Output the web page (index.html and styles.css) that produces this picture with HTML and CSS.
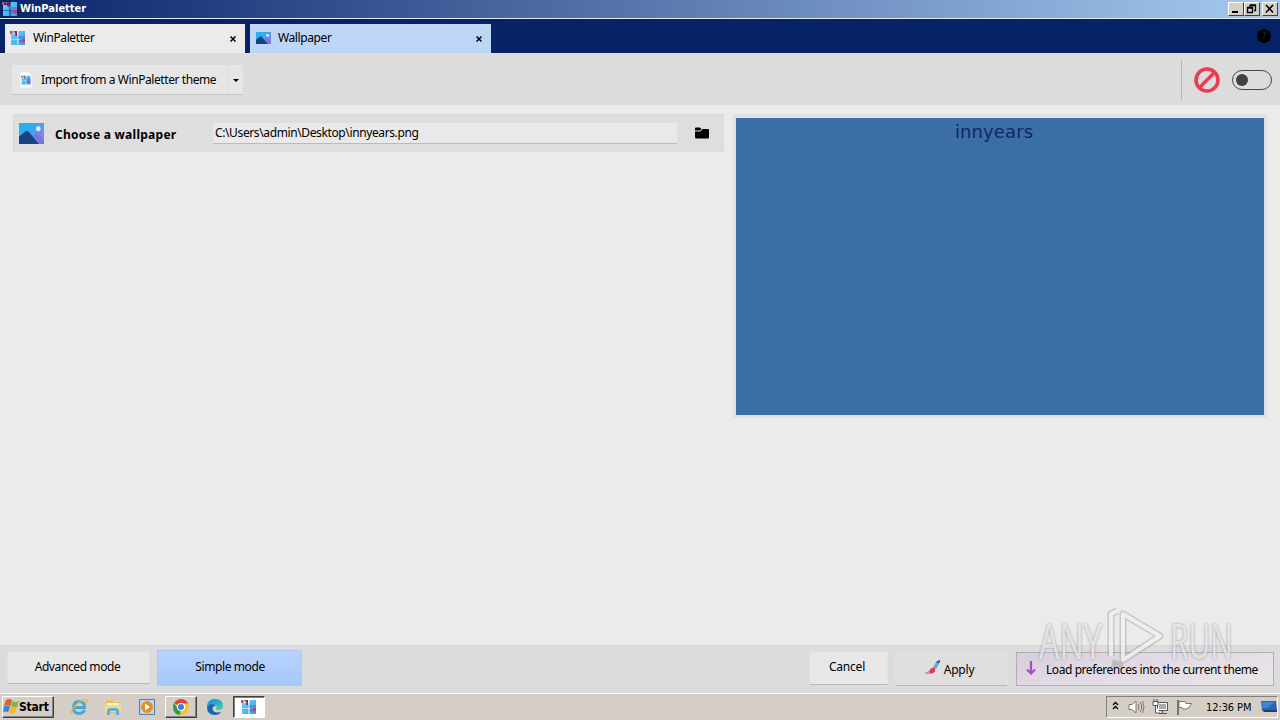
FILE: index.html
```html
<!DOCTYPE html>
<html lang="en">
<head>
    <meta charset="utf-8">
    <title>WinPaletter</title>
    <link rel="stylesheet" href="styles.css">
</head>
<body>
    <!-- shared icons -->
    <svg class="defs" width="0" height="0">
        <defs>
            <linearGradient id="tile" x1="0" y1="0" x2="1" y2="1"><stop offset="0" stop-color="#72d0fb"/><stop offset="1" stop-color="#2f9fee"/></linearGradient>
            <linearGradient id="sky" x1="0" y1="0" x2="1" y2="1"><stop offset=".3" stop-color="#2aaef0"/><stop offset="1" stop-color="#aa75f0"/></linearGradient>
            <linearGradient id="edge" x1="0" y1="0" x2="1" y2="1"><stop offset="0" stop-color="#1690cf"/><stop offset=".5" stop-color="#22acd5"/><stop offset="1" stop-color="#55d78b"/></linearGradient>
        </defs>
        <symbol id="logo" viewBox="0 0 16 16">
            <path d="M1 4h6.500v5H1zM8.500 1H15v8H8.500zM1 9.500h6.500V15H1zM8.500 9.500H15V15H8.500z" fill="url(#tile)"/>
            <path d="M0 1h2.500v3H0zM3.500 1h1.500v2H3.500z" fill="#a05a78"/>
            <path d="M5 1h2v5H5.500z" fill="#7c2b50"/>
            <path d="M8.500 6H15v3H8.500z" fill="#4b8fe0"/>
            <path d="M12 9h3v3.500h-3z" fill="#c8405f"/>
            <path d="M9 9.500h3v3H9z" fill="#5c77c4"/>
        </symbol>
        <symbol id="picture" viewBox="0 0 24 20" preserveAspectRatio="none">
            <path d="M0 0h24v20H0z" fill="url(#sky)"/>
            <path d="M13 14l4-5 7 7v4H13z" fill="#7878dd"/>
            <path d="M0 13l6-5q2-1 4 1l9 11H0z" fill="#164481"/>
            <circle cx="18.500" cy="5.500" r="2.300" fill="#e4f4ff"/>
        </symbol>
        <symbol id="cross" viewBox="0 0 6 6">
            <path d="M.5 .5l5 5M5.500 .5l-5 5" stroke="#000" stroke-width="1.500"/>
        </symbol>
    </svg>

    <header class="titlebar">
        <svg class="icon16"><use href="#logo"/></svg>
        <span class="title">WinPaletter</span>
        <div class="captions">
            <button><svg width="14" height="12"><path d="M3 9h6" stroke="#000" stroke-width="2"/></svg></button>
            <button><svg width="14" height="12"><path d="M5 4V2.500h5.500v5H9M5 2h6M2 5h6M2.500 4.500h5v5h-5z" fill="none" stroke="#000" stroke-width="1.300"/></svg></button>
            <button class="close"><svg width="14" height="12"><path d="M3 2l7 7.500M10 2L3 9.500" stroke="#000" stroke-width="1.600"/></svg></button>
        </div>
    </header>

    <nav class="tabs">
        <div class="tab">
            <svg class="icon16"><use href="#logo"/></svg>
            <span class="tab-name">WinPaletter</span>
            <svg class="x"><use href="#cross"/></svg>
        </div>
        <div class="tab selected">
            <svg class="icon-pic"><use href="#picture"/></svg>
            <span class="tab-name">Wallpaper</span>
            <svg class="x"><use href="#cross"/></svg>
        </div>
        <span class="help">?</span>
    </nav>

    <section class="toolbar">
        <div class="import">
            <svg class="file" viewBox="0 0 14 18">
                <path d="M1 1h9l3 3v13H1z" fill="#fbfbfd" stroke="#d5dbe2" stroke-width=".5"/>
                <use href="#logo" x="2" y="4" width="10" height="10"/>
            </svg>
            <span>Import from a WinPaletter theme</span>
            <span class="drop"><svg width="6" height="3"><path d="M0 0h6L3 3z"/></svg></span>
        </div>
        <div class="status">
            <svg width="26" height="26" viewBox="0 0 26 26"><circle cx="13" cy="13" r="11" fill="none" stroke="#ea3c52" stroke-width="3.600"/><path d="M5.500 20.500l15-15" stroke="#ea3c52" stroke-width="3.600"/></svg>
            <span class="toggle"></span>
        </div>
    </section>

    <main>
        <div class="chooser">
            <svg class="big-pic"><use href="#picture"/></svg>
            <b>Choose a wallpaper</b>
            <div class="path">C:\Users\admin\Desktop\innyears.png</div>
            <svg class="folder" viewBox="0 0 14 12"><path d="M0 1.500Q0 .5 1 .5h4L6.500 2 5 3.500H0z"/><path d="M0 4.500h5.500L7.500 2H13q1 0 1 1v7.500q0 1-1 1H1q-1 0-1-1z"/></svg>
        </div>
        <div class="preview"><span>innyears</span></div>
    </main>

    <footer class="actions">
        <button class="btn advanced">Advanced mode</button>
        <button class="btn simple">Simple mode</button>
        <button class="btn cancel">Cancel</button>
        <button class="btn apply">
            <svg width="16" height="16" viewBox="0 0 16 16"><path d="M8 8l3-6 4-2v2l-4 7z" fill="#55acd8"/><path d="M11 2l4-2v2l-2 1z" fill="#245b88"/><path d="M0 12.500q4 0 5-3 2-3 5-1v3q-2 3-9 2z" fill="#ed344c"/><path d="M0 12.500l5-1v2q-3 1-5-1z" fill="#d997a5"/></svg>
            <span>Apply</span>
        </button>
        <button class="btn load">
            <svg width="10" height="14" viewBox="0 0 10 14"><path d="M5 0v12M1 8.500l4 4 4-4" fill="none" stroke="#a44bc9" stroke-width="2.200"/></svg>
            <span>Load preferences into the current theme</span>
        </button>
    </footer>

    <footer class="taskbar">
        <div class="start">
            <svg width="16" height="16" viewBox="0 0 16 16"><path d="M3 1q3-2 6 0L7.500 7Q4 5 1 7z" fill="#e55e2b"/><path d="M9.500 2q3 2 6.500 0l-2 6q-3 1-6-1z" fill="#80b53e"/><path d="M1 7.500q3-2 6 0l-2 6q-2-2-5 0z" fill="#3b83cf"/><path d="M7.500 7.500q3 2 6 1l-2 6q-3 1-5.500-1z" fill="#f5b82e"/></svg>
            <span>Start</span>
        </div>
        <div class="apps">
            <span class="app"><svg viewBox="0 0 18 18"><path d="M14.500 12q-1.500 3.500-5.500 3.500-5.500 0-5.500-6T9 3.500q6 0 5.500 6H5" fill="none" stroke="#44a6df" stroke-width="2.800"/><path d="M2 16q-3-2 4-9t10.500-5q1.500 1-1 4" fill="none" stroke="#e5b935" stroke-width="1.300"/></svg></span>
            <span class="app"><svg viewBox="0 0 18 18"><path d="M2 2h6l1 2h7v11H2z" fill="#e3c262"/><path d="M3 5h12v3H3z" fill="#fff3c2"/><path d="M1 7h16v7H1z" fill="#f0da8e"/><path d="M3 17v-5q1-2 3-2h6q2 0 3 2v5h-3v-4H6v4z" fill="#5eafda"/></svg></span>
            <span class="app"><svg viewBox="0 0 18 18"><path d="M1.500 1.500h15v15h-15z" fill="#aed4ef" stroke="#4c86b9"/><path d="M3.500 3.500h11v11h-11z" fill="#d9e6ec"/><circle cx="9" cy="9" r="6" fill="#ee8c20"/><path d="M7 5.500l5 3.500-5 3.500z" fill="#fff"/></svg></span>
            <span class="app raised"><svg viewBox="0 0 18 18"><circle cx="9" cy="9" r="8" fill="#f4c62c"/><path d="M9 9L2 5Q5 1 9 1q5 0 7 4.500H9z" fill="#df4436"/><path d="M9 9l-1 8Q1 16 1 9q0-2 1-4l4 6z" fill="#2c9b50"/><circle cx="9" cy="9" r="4" fill="#fff"/><circle cx="9" cy="9" r="3" fill="#397fe7"/></svg></span>
            <span class="app"><svg viewBox="0 0 18 18"><path d="M1 9Q1 1 9 1t8 7q0 4-4 4-3 0-3-1.500 1-1 .5-2.500Q9.500 6 7 6 3 6 1 9z" fill="url(#edge)"/><path d="M1 9q2-3.500 6-3 2.500.5 3 2-3-.5-3.500 2Q6.500 14 11 14.500q2.500.3 4.500-1Q13 17 9 17 1 17 1 9z" fill="#1767b2"/></svg></span>
            <span class="app pressed"><svg viewBox="0 0 18 18"><use href="#logo" x="1" y="1" width="16" height="16"/></svg></span>
        </div>
        <div class="tray">
            <svg class="chev" viewBox="0 0 7 9"><path d="M1 4l2.500-2.500L6 4M1 8l2.500-2.500L6 8" fill="none" stroke="#000" stroke-width="1.300"/></svg>
            <svg class="sound" viewBox="0 0 17 16"><path d="M1 5.500h3L8 2v12l-4-3.500H1z" fill="#fff" stroke="#777"/><path d="M10 5q2 3 0 6M12 3q3.500 5 0 10M14.500 2q3 6 0 12" fill="none" stroke="#777"/></svg>
            <svg class="net" viewBox="0 0 17 16"><path d="M5.500 3.500h10v8h-10z" fill="#aaa" stroke="#555"/><path d="M6.500 4.500h8v6h-8z" fill="none" stroke="#fff"/><path d="M1 2.500h5v4H1zM2 0v3M5 0v3M3.500 6v8H8M7 14.500h8M10.500 12v2" fill="#fff" stroke="#555"/></svg>
            <svg class="flag" viewBox="0 0 17 16"><path d="M2 1v15" stroke="#777" stroke-width="2"/><path d="M3 2.500h6l1 2h5.500L13 8.500l-3 1.500H7L6 8.500H3z" fill="#fff" stroke="#777"/></svg>
            <span class="clock">12:36 PM</span>
            <svg class="desk" viewBox="0 0 16 14"><path d="M0 1h15l1 9H1z" fill="#2468bd"/><path d="M1 2h13L6 8H1.500z" fill="#3f86d8"/><path d="M1 10h15v2H3z" fill="#263f60"/></svg>
        </div>
    </footer>

    <!-- watermark over the bottom right corner -->
    <div class="watermark">
        <span>ANY</span>
        <svg width="58" height="64" viewBox="0 0 58 64">
            <path class="wm-edge" d="M17 6l37 22-37 24zM11 3L5 6v42M6 55l11 3"/>
            <path class="wm-line" d="M17 6l37 22-37 24zM11 3L5 6v42"/>
        </svg>
        <span>RUN</span>
    </div>
</body>
</html>
```
FILE: styles.css
```css
* {
    box-sizing: border-box;
}
body {
    margin: 0;
    width: 1280px;
    height: 720px;
    overflow: hidden;
    position: relative;
    display: flex;
    flex-direction: column;
    background: #ebebeb;
    color: #000;
    font: 12px/16px "Noto Sans", "Open Sans", sans-serif;
    letter-spacing: -0.4px;
}
svg {
    display: block;
    flex: none;
}
span, b {
    white-space: nowrap;
}
button {
    font: inherit;
    letter-spacing: inherit;
    color: inherit;
    padding: 0;
    border: 0;
}
.defs {
    position: absolute;
}
.icon16 {
    width: 16px;
    height: 16px;
}

/* title bar */
.titlebar {
    height: 19px;
    display: flex;
    align-items: center;
    padding: 0 2px;
    border-bottom: 1px solid #e5e8ee;
    background: linear-gradient(90deg, #0a246a, #a6caf0);
}
.title {
    margin-left: 2px;
    padding-bottom: 1px;
    color: #fff;
    font: bold 11px/16px "DejaVu Sans Condensed", "DejaVu Sans", sans-serif;
    letter-spacing: 0;
}
.captions {
    margin-left: auto;
    display: flex;
}
.captions button {
    width: 16px;
    height: 14px;
    background: #d4d0c8;
    border: 1px solid;
    border-color: #fff #404040 #404040 #fff;
}
.captions .close {
    margin-left: 2px;
}

/* tabs */
.tabs {
    height: 34px;
    display: flex;
    align-items: flex-end;
    gap: 5px;
    padding: 0 9px 0 5px;
    background: #062367;
}
.tab {
    width: 240px;
    height: 29px;
    display: flex;
    align-items: center;
    padding: 0 9px 2px 5px;
    background: #ebebeb;
}
.tab.selected {
    width: 241px;
    background: #bdd5f6;
}
.icon-pic {
    width: 15px;
    height: 12px;
    margin-left: 1px;
}
.tab-name {
    margin-left: 7px;
}
.x {
    width: 6px;
    height: 6px;
    margin: 3px 0 0 auto;
}
.help {
    width: 14px;
    height: 14px;
    margin: 0 0 10px auto;
    border-radius: 50%;
    background: #000;
    color: #253047;
    font-size: 9px;
    line-height: 14px;
    text-align: center;
}

/* toolbar */
.toolbar {
    height: 52px;
    display: flex;
    align-items: center;
    justify-content: space-between;
    padding: 2px 8px 0 12px;
    background: #dcdcdc;
}
.import {
    width: 231px;
    height: 30px;
    display: flex;
    align-items: center;
    padding-left: 7px;
    background: #e6e6e6;
    border-bottom: 1px solid #c6c6c6;
    letter-spacing: -0.42px;
}
.file {
    width: 14px;
    height: 18px;
    margin-right: 8px;
}
.drop {
    width: 15px;
    height: 29px;
    margin-left: auto;
    padding: 14px 0 0 4px;
    border-left: 1px solid #dedede;
}
.status {
    height: 40px;
    display: flex;
    align-items: center;
    gap: 12px;
    padding-left: 12px;
    border-left: 1px solid #b5b5b5;
}
.toggle {
    width: 40px;
    height: 20px;
    padding: 3px;
    border: 1px solid #484848;
    border-radius: 10px;
}
.toggle::before {
    content: "";
    display: block;
    width: 12px;
    height: 12px;
    border-radius: 50%;
    background: #414141;
}

/* content */
main {
    height: 540px;
    display: flex;
    align-items: flex-start;
    gap: 9px;
    padding: 9px 0 0 13px;
}
.chooser {
    width: 711px;
    height: 38px;
    display: flex;
    align-items: center;
    padding-left: 6px;
    background: #dedede;
    border: 1px solid #dadada;
}
.big-pic {
    width: 25px;
    height: 21px;
    margin: 0 11px 0 -1px;
}
.chooser b {
    width: 122px;
    margin-top: 3px;
    letter-spacing: 0.27px;
}
.path {
    width: 464px;
    height: 21px;
    margin-left: 36px;
    padding: 2px;
    background: #e9e9e9;
    border-bottom: 1px solid #bababa;
    letter-spacing: -0.38px;
}
.folder {
    width: 14px;
    height: 12px;
    margin-left: 18px;
}
.preview {
    width: 534px;
    height: 304px;
    padding-left: 219px;
    background: #3a6ea5;
    border: 3px solid #dce2e7;
    border-top-width: 4px;
    border-left-color: #e1e1e1;
    color: #14265f;
    font: 18px/28px "DejaVu Sans", sans-serif;
    letter-spacing: 0.1px;
}

/* bottom actions */
.actions {
    height: 48px;
    display: flex;
    align-items: flex-start;
    padding: 5px 6px 0 7px;
    background: #dcdcdc;
    border-top: 1px solid #d7d7d7;
}
.btn {
    height: 34px;
    display: flex;
    align-items: center;
    justify-content: center;
    padding: 0 2px 2px 0;
    background: #e7e7e7;
    border: 1px solid #e2e2e2;
    border-bottom-color: #bababa;
}
.advanced {
    width: 143px;
    height: 33px;
    padding-bottom: 1px;
}
.simple {
    width: 145px;
    height: 36px;
    margin: -1px auto 0 7px;
    padding: 0 0 3px 1px;
    background: linear-gradient(#b9d2fc, #a6c8fc);
    border-color: #a8c8f8;
}
.cancel {
    width: 79px;
    margin-right: 7px;
    padding-right: 3px;
    letter-spacing: -0.2px;
}
.apply {
    width: 113px;
    margin-right: 8px;
    padding-right: 4px;
    gap: 3px;
    background: #dfdfdf;
    letter-spacing: -0.2px;
}
.load {
    width: 258px;
    justify-content: flex-start;
    padding-left: 9px;
    gap: 10px;
    background: linear-gradient(165deg, #d8cedc, #e3dce5 50%, #e8e6e9);
    border-color: #b5acb8;
    letter-spacing: -0.43px;
}
.apply, .load {
    margin-top: 1px;
}
.apply span, .load span {
    margin-top: 3px;
}

/* taskbar */
.taskbar {
    height: 27px;
    display: flex;
    align-items: flex-start;
    padding: 2px 2px 0;
    background: #d5cec6;
    border-top: 1px solid #fff;
    letter-spacing: 0;
}
.start {
    width: 52px;
    height: 22px;
    display: flex;
    align-items: center;
    border: 1px solid;
    border-color: #fff #404040 #404040 #fff;
    box-shadow: inset -1px -1px #808080;
    font: bold 12px/16px "DejaVu Sans Condensed", sans-serif;
    letter-spacing: -0.2px;
}
.apps {
    display: flex;
    margin-left: 9px;
    gap: 2px;
}
.app {
    width: 32px;
    height: 22px;
    display: flex;
    align-items: center;
    justify-content: center;
}
.app svg {
    width: 18px;
    height: 18px;
}
.raised {
    border: 1px solid;
    border-color: #fff #404040 #404040 #fff;
    box-shadow: inset -1px -1px #808080;
}
.pressed {
    background: #fff;
    border: 1px solid;
    border-color: #404040 #fff #fff #404040;
    box-shadow: inset 1px 1px #808080;
}
.tray {
    width: 172px;
    height: 22px;
    margin-left: auto;
    display: flex;
    align-items: center;
    padding-left: 5px;
    border: 1px solid;
    border-color: #808080 #fff #fff #808080;
    font: 11px/16px "DejaVu Sans Condensed", sans-serif;
}
.chev {
    width: 7px;
    height: 9px;
    margin: -3px 9px 0 0;
}
.sound, .net, .flag {
    width: 17px;
    height: 16px;
    margin-right: 7px;
}
.clock {
    margin: 1px 0 0 6px;
    letter-spacing: -0.1px;
}
.desk {
    width: 16px;
    height: 14px;
    margin-left: auto;
}

.watermark {
    position: absolute;
    left: 1039px;
    top: 608px;
    width: 192px;
    height: 64px;
    display: flex;
    justify-content: space-between;
    color: rgba(255, 255, 255, .7);
    font: 49px/64px "Open Sans", sans-serif;
    letter-spacing: 0;
    text-shadow: 0 0 3px rgba(100, 100, 100, .65);
    pointer-events: none;
}
.watermark span {
    width: 61px;
    transform: scaleX(.66);
    transform-origin: 0 0;
}
.watermark span:last-child {
    transform: scaleX(.61);
}
.watermark path {
    fill: none;
    stroke-linejoin: round;
}
.wm-edge {
    stroke: rgba(110, 110, 110, .28);
    stroke-width: 7;
}
.wm-line {
    stroke: rgba(255, 255, 255, .7);
    stroke-width: 4;
}
```
